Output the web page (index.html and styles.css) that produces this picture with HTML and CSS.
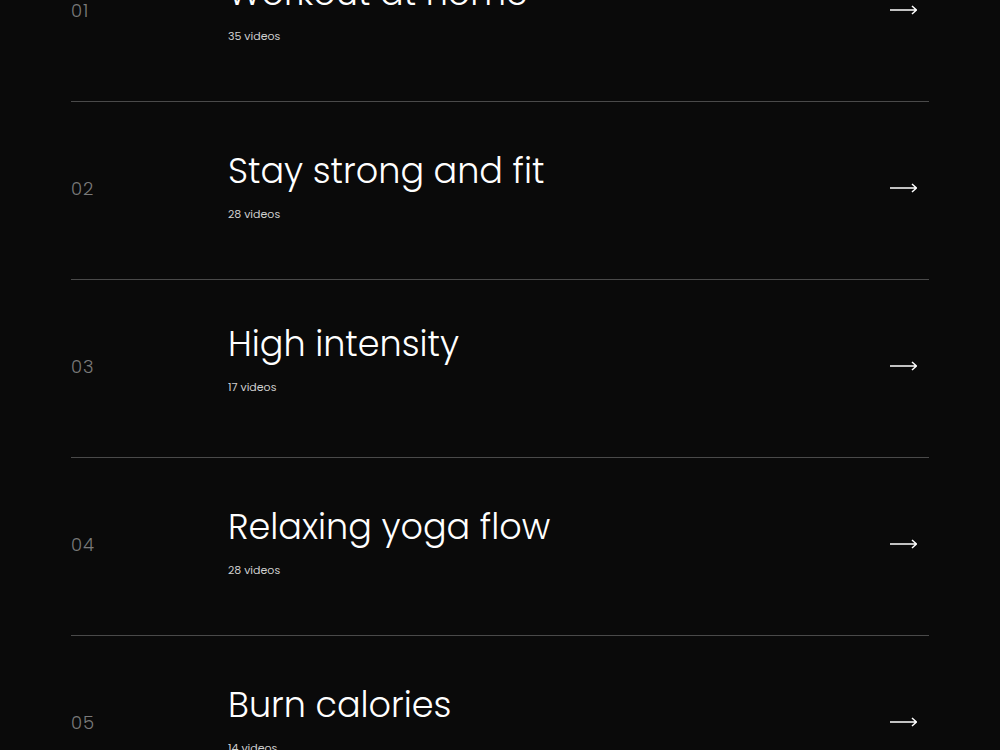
FILE: index.html
```html
<!DOCTYPE html>
<html lang="en">
<head>
  <meta charset="UTF-8">
  <title>Programs</title>
  <meta name="viewport" content="width=device-width, initial-scale=1.0">
  <link rel="stylesheet" href="styles.css">
</head>
<body>
  <div class="container">
    <ul class="programs">
      <li class="program">
        <span class="program-num">01</span>
        <div class="program-info">
          <h3>Workout at home</h3>
          <p>35 videos</p>
        </div>
        <svg class="arrow" viewBox="0 0 27 10" width="27" height="10"><path d="M0 5H26.5M22 1L26.5 5L22 9" /></svg>
      </li>
      <li class="program">
        <span class="program-num">02</span>
        <div class="program-info">
          <h3>Stay strong and fit</h3>
          <p>28 videos</p>
        </div>
        <svg class="arrow" viewBox="0 0 27 10" width="27" height="10"><path d="M0 5H26.5M22 1L26.5 5L22 9" /></svg>
      </li>
      <li class="program">
        <span class="program-num">03</span>
        <div class="program-info is-entering">
          <h3>High intensity</h3>
          <p>17 videos</p>
        </div>
        <svg class="arrow" viewBox="0 0 27 10" width="27" height="10"><path d="M0 5H26.5M22 1L26.5 5L22 9" /></svg>
      </li>
      <li class="program">
        <span class="program-num">04</span>
        <div class="program-info">
          <h3>Relaxing yoga flow</h3>
          <p>28 videos</p>
        </div>
        <svg class="arrow" viewBox="0 0 27 10" width="27" height="10"><path d="M0 5H26.5M22 1L26.5 5L22 9" /></svg>
      </li>
      <li class="program">
        <span class="program-num">05</span>
        <div class="program-info">
          <h3>Burn calories</h3>
          <p>14 videos</p>
        </div>
        <svg class="arrow" viewBox="0 0 27 10" width="27" height="10"><path d="M0 5H26.5M22 1L26.5 5L22 9" /></svg>
      </li>
    </ul>
  </div>
</body>
</html>
```
FILE: styles.css
```css
/* Dark page, list scrolled part way */
body {
  margin: 0;
  background: #0a0a0a;
  color: #fff;
  font-family: 'Poppins', 'Lato', 'Liberation Sans', sans-serif;
  overflow: hidden;
}

.container {
  max-width: 858px;
  margin: 0 auto;
}

.programs {
  list-style: none;
  margin: -76px 0 0;
  padding: 0;
}

/* One row: number | title block | arrow */
.program {
  display: grid;
  grid-template-columns: 157px 1fr auto;
  height: 177px;
  border-bottom: 1px solid #4a4a4a;
}

.program-num {
  align-self: center;
  margin-top: -5px;
  font-size: 18px;
  font-weight: 300;
  letter-spacing: 1px;
  color: #7a7a7a;
}

.program-info {
  padding-top: 47px;
  transition: transform 0.4s ease;
}

/* title block still sliding into place */
.program-info.is-entering {
  transform: translateY(-5px);
}

.program-info h3 {
  margin: 0;
  font-size: 35px;
  font-weight: 300;
  line-height: 44px;
}

.program-info p {
  margin: 13px 0 0;
  font-size: 11px;
  color: #cfcfcf;
}

.arrow {
  align-self: center;
  margin: -5px 12px 0 0;
  fill: none;
  stroke: #fff;
  stroke-width: 1.5;
}
```
